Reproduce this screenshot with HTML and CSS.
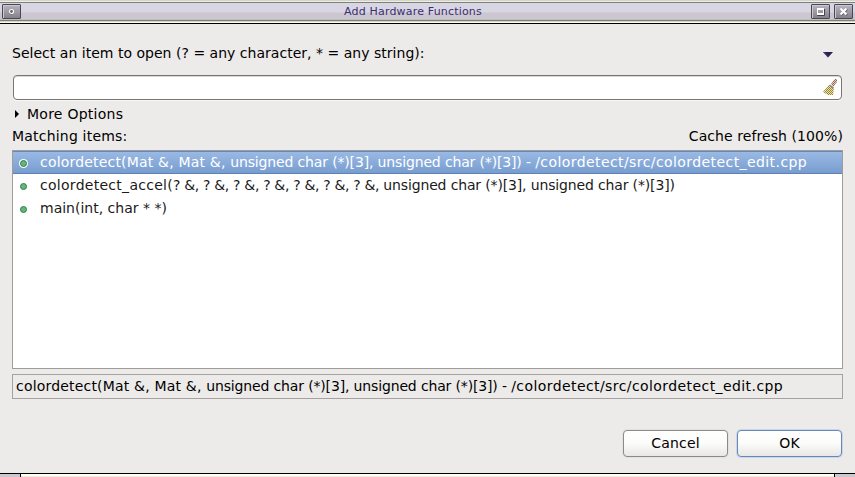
FILE: index.html
```html
<!DOCTYPE html>
<html lang="en">
<head>
<meta charset="utf-8">
<title>Add Hardware Functions</title>
<link rel="stylesheet" href="styles.css">
</head>
<body>
<div class="window">
  <header class="titlebar">
    <button class="winbtn" aria-label="Menu"><svg width="17" height="13" viewBox="0 0 17 13"><circle cx="8.5" cy="7" r="2" fill="#555" stroke="#555"/><circle cx="8.5" cy="6.5" r="2" fill="#625f68" stroke="#fff" stroke-width="1.2"/></svg></button>
    <h1 class="title">Add Hardware Functions</h1>
    <button class="winbtn max" aria-label="Maximize"><svg width="17" height="13" viewBox="0 0 17 13"><path d="M5.5 4v6.500h7V4" fill="none" stroke="#44424a"/><path d="M5 3h7v7H5zM6 5v3h5V5z" fill="#fff" fill-rule="evenodd"/></svg></button>
    <button class="winbtn" aria-label="Close"><svg width="17" height="13" viewBox="0 0 17 13"><path d="M6 4l6 6M12 4l-6 6" stroke="#44424a" stroke-width="2.400"/><path d="M5.500 3.500l6 6M11.500 3.500l-6 6" stroke="#fff" stroke-width="2.400"/></svg></button>
  </header>
  <main class="content">
    <div class="row prompt"><label for="q">Select an item to open (? = any character, * = any string):</label>
      <svg class="menu-arrow" width="10" height="6" viewBox="0 0 10 6"><path d="M0 0h10L5 5.500z" fill="#2b2140"/><path d="M0 0h1.500L5 4v1.500z" fill="#5b35b0"/></svg></div>
    <div class="search"><input id="q" type="text">
      <svg width="15" height="17" viewBox="0 0 15 17">
        <defs><pattern id="straw" width="2" height="2" patternUnits="userSpaceOnUse"><path d="M0 0h2v2H0z" fill="#ece4a0"/><path d="M0 0h1v1H0zM1 1h1v1H1z" fill="#94843c"/></pattern>
        <pattern id="wood" width="2" height="2" patternUnits="userSpaceOnUse"><path d="M0 0h2v2H0z" fill="#e6cbb3"/><path d="M0 0h1v1H0zM1 1h1v1H1z" fill="#896c5b"/></pattern></defs>
        <path d="M6 6l5 3-1 7H5l-5-3z" fill="url(#straw)"/><path d="M8 5l3-4 1-1h2v3l-4 5z" fill="url(#wood)"/><path d="M6.500 6l4 3" stroke="#8a83a2" stroke-width="1.300"/></svg></div>
    <div class="row more"><svg width="4" height="8" viewBox="0 0 4 8"><path d="M0 0l4 4-4 4z" fill="#000"/></svg><span>More Options</span></div>
    <div class="row matching"><span class="caption">Matching items:</span><span class="progress">Cache refresh (100%)</span></div>
    <ul class="list">
      <li class="item selected"><i class="dot"></i><span class="sig"><span class="name">colordetect(Mat &amp;, Mat &amp;, </span><span class="args">unsigned char (*)[3], unsigned char (*)[3]) - </span><span class="path">/colordetect/src/colordetect_edit.cpp</span></span></li>
      <li class="item"><i class="dot"></i><span class="sig"><span class="func">colordetect_accel(</span><span class="unknown">? &amp;, ? &amp;, ? &amp;, ? &amp;, ? &amp;, ? &amp;, ? &amp;, </span><span class="args">unsigned char (*)[3], unsigned char (*)[3])</span></span></li>
      <li class="item"><i class="dot"></i><span class="sig">main(int, char * *)</span></li>
    </ul>
    <div class="status"><span class="name">colordetect(Mat &amp;, Mat &amp;, </span><span class="args">unsigned char (*)[3], unsigned char (*)[3]) - </span><span class="path">/colordetect/src/colordetect_edit.cpp</span></div>
    <div class="actions"><button class="btn">Cancel</button><button class="btn primary">OK</button></div>
  </main>
  <footer class="frame"><i></i><i></i><i></i></footer>
</div>
</body>
</html>
```
FILE: styles.css
```css
* { box-sizing: border-box; }
body { margin: 0; background: #edebe9; color: #000; font: 14px/18px "DejaVu Sans", sans-serif; overflow: hidden; }
.window { width: 855px; height: 477px; display: flex; flex-direction: column; }
.titlebar {
  height: 24px; flex: none; display: flex; align-items: flex-start; padding: 4px 2px 0;
  background: linear-gradient(#d5d5ca 0 1px, #efeee6 1px 2px, #7d807b 2px 3px, #d9d6e4 3px 12px, #cbc6cf 13px 19px, #c0bdbd 19px 20px, #7d807b 20px 21px, #d9d6c8 21px 22px, #fff9e8 22px 23px, #000 23px);
}
.winbtn {
  width: 19px; height: 15px; padding: 0; border: 1px solid #494754; border-radius: 1px;
  background: linear-gradient(#b7b4bd, #85818a); box-shadow: inset 1px 1px #cbc8d0; display: flex;
}
.winbtn svg { display: block; }
.max { margin-right: 4px; }
.title { flex: 1; margin: 0; padding-right: 6px; color: #392e71; font-size: 11px; line-height: 15px; font-weight: normal; letter-spacing: .18px; text-align: center; }
.content { flex: 1; display: flex; flex-direction: column; padding: 20px 12px 0; }
.row { display: flex; justify-content: space-between; height: 18px; flex: none; white-space: nowrap; }
.prompt { align-items: center; padding-right: 10px; letter-spacing: .02px; }
.menu-arrow { margin-top: 3px; }
.search {
  height: 25px; flex: none; margin: 13px 1px 0; border: 1px solid #777572; border-radius: 4px;
  background: #fff; display: flex; align-items: center; padding-right: 3px; box-shadow: 0 1px #f8f7f6, inset 0 1px #d8d7d6;
}
.search input { flex: 1; min-width: 0; border: 0; outline: 0; background: transparent; font: inherit; }
.more { justify-content: flex-start; align-items: center; gap: 8px; margin-top: 5px; padding-left: 3px; letter-spacing: .25px; }
.matching { margin-top: 4px; }
.caption { letter-spacing: .2px; }
.progress { letter-spacing: .08px; }
.list { height: 219px; flex: none; margin: 5px 0 0; padding: 0; list-style: none; border: 1px solid #9f9c99; background: #fff; }
.item { height: 23px; display: flex; align-items: center; padding-left: 7px; gap: 13px; color: #1a1a1a; white-space: nowrap; }
.sig { padding-bottom: 2px; white-space: pre; }
.name { letter-spacing: .19px; }
.args { letter-spacing: -.15px; }
.path { letter-spacing: .42px; }
.func { letter-spacing: .28px; }
.unknown { letter-spacing: -.33px; }
.selected { color: #fff; background: linear-gradient(#9ab9e4, #779dcf); border-top: 1px solid #6388bb; border-bottom: 1px solid #5e82b6; }
.dot { width: 7px; height: 7px; margin-top: 2px; border: 1px solid #27814a; border-radius: 50%; background: #67b579; }
.selected .dot { box-shadow: 0 0 0 1px #fff; }
.status { height: 25px; flex: none; margin-top: 5px; padding: 2px 3px; border: 1px solid #a4a19f; white-space: pre; }
.actions { display: flex; justify-content: flex-end; gap: 9px; margin: 31px 1px 0 0; }
.btn {
  width: 105px; height: 27px; padding: 0 0 2px; border: 1px solid #8c8a87; border-radius: 4px; letter-spacing: .2px;
  background: linear-gradient(#fff, #fbfbfa 50%, #e9e7e5); color: #000; font: inherit; box-shadow: 0 0 0 1px #e4e2e0;
}
.primary { border-color: #6388b9; box-shadow: 0 0 0 1px #cbd7e7; }
.frame { height: 4px; flex: none; border-top: 1px solid #000; display: grid; grid-template-columns: 21px 1fr 21px; background: linear-gradient(#fffff0 0 2px, #eee8df 2px); }
.frame i:first-child { background: #cbc8d0; border-right: 1px solid #000; }
.frame i:last-child { background: #cbc8d0; border-left: 1px solid #000; }
```
